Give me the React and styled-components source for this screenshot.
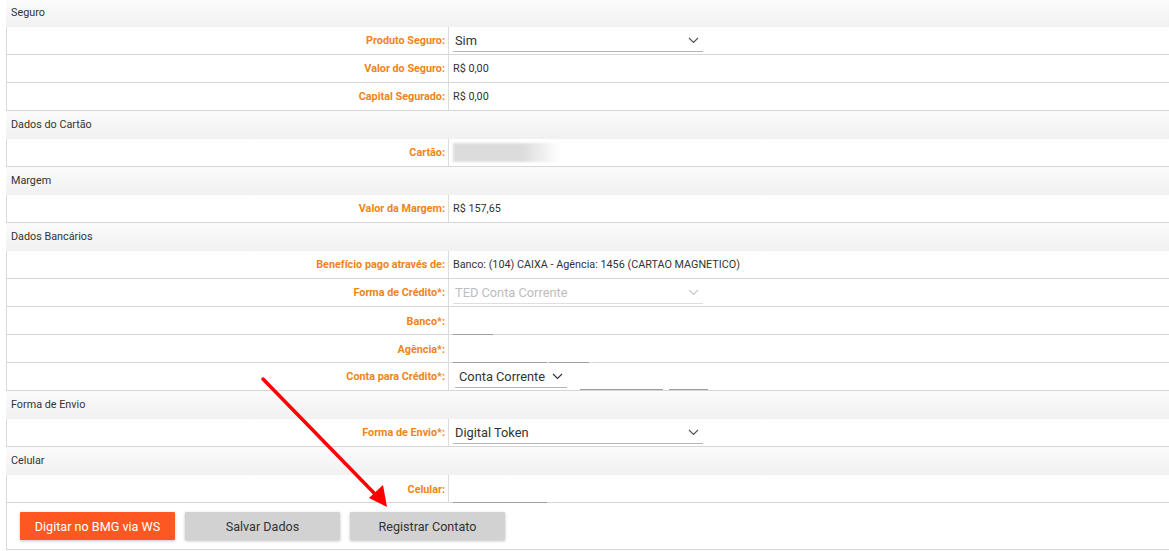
import React from "react";
import styled, { createGlobalStyle } from "styled-components";

const Global = createGlobalStyle`
  html, body { margin: 0; padding: 0; background: #fff; }
  body { font-family: Roboto, "Liberation Sans", Arial, sans-serif; font-size: 10.8px; color: #333; }
  * { box-sizing: border-box; }
`;

const Page = styled.div`
  position: relative;
  width: 1169px;
  height: 551px;
  overflow: hidden;
  background: #fff;
`;

const Table = styled.div`
  display: flex;
  flex-direction: column;
  padding-left: 6px;
`;

const SectionHeader = styled.div`
  height: 28px;
  display: flex;
  align-items: center;
  padding: 0 0 2px 5px;
  background: linear-gradient(#fbfbfb, #f1f1f1);
  color: #333;
  font-size: 10.8px;
  &:first-child { height: 27px; }
`;

const Row = styled.div`
  height: 28px;
  display: grid;
  grid-template-columns: 442px 1fr;
  border-left: 1px solid #d9d9d9;
  border-bottom: 1px solid #d6d6d6;
  background: #fff;
`;

const Label = styled.div`
  display: flex;
  align-items: center;
  justify-content: flex-end;
  padding-right: 3px;
  color: #ef8420;
  font-weight: 700;
  font-size: 10.8px;
  border-right: 1px solid #dcdcdc;
`;

const Value = styled.div`
  display: flex;
  align-items: center;
  gap: ${(p) => p.$gap || 2}px;
  padding-left: 4px;
  font-size: 10.8px;
  color: #333;
`;

const SelectBox = styled.div`
  width: ${(p) => p.$w}px;
  height: 22px;
  margin-top: ${(p) => p.$mt || 0}px;
  display: flex;
  align-items: center;
  justify-content: space-between;
  padding: 0 4px 0 ${(p) => p.$pl ?? 2}px;
  border-bottom: 1px solid ${(p) => (p.$disabled ? "#dedede" : "#b5b5b5")};
  color: ${(p) => (p.$disabled ? "#bdbdbd" : "#333")};
  font-size: 12.8px;
  svg { flex: none; }
`;

const Line = styled.div`
  width: ${(p) => p.$w}px;
  height: 18px;
  margin-top: ${(p) => p.$mt || 10}px;
  border-bottom: 1px solid #9e9e9e;
`;

const Blur = styled.div`
  width: 107px;
  height: 19px;
  background: linear-gradient(to right, #dcdcdc 0%, #dcdcdc 65%, #fff 100%);
  filter: blur(1px);
`;

const ButtonBar = styled.div`
  height: 47px;
  display: flex;
  align-items: center;
  gap: 10px;
  padding: 0 0 0 13px;
  border-left: 1px solid #d9d9d9;
  border-bottom: 1px solid #d6d6d6;
`;

const Button = styled.button`
  width: 155px;
  height: 28px;
  border: none;
  border-radius: 1px;
  font-family: Roboto, "Liberation Sans", Arial, sans-serif;
  font-size: 12.6px;
  color: ${(p) => (p.$primary ? "#fff" : "#333")};
  background: ${(p) => (p.$primary ? "#ff5722" : "#d2d2d2")};
  box-shadow: 0 1px 3px rgba(0, 0, 0, 0.25);
  padding: 0;
`;

const ArrowLayer = styled.svg`
  position: absolute;
  left: 0;
  top: 0;
  pointer-events: none;
`;

const Chevron = ({ color = "#555" }) => (
  <svg width="11" height="7" viewBox="0 0 11 7">
    <path d="M1 1 L5.5 5.5 L10 1" fill="none" stroke={color} strokeWidth="1.2" />
  </svg>
);

const Field = ({ label, children, gap }) => (
  <Row>
    <Label>{label}</Label>
    <Value $gap={gap}>{children}</Value>
  </Row>
);

export default function App() {
  return (
    <Page>
      <Global />
      <Table>
        <SectionHeader>Seguro</SectionHeader>
        <Field label="Produto Seguro:">
          <SelectBox $w={250}>
            <span>Sim</span>
            <Chevron />
          </SelectBox>
        </Field>
        <Field label="Valor do Seguro:">R$ 0,00</Field>
        <Field label="Capital Segurado:">R$ 0,00</Field>

        <SectionHeader>Dados do Cartão</SectionHeader>
        <Field label="Cartão:">
          <Blur />
        </Field>

        <SectionHeader>Margem</SectionHeader>
        <Field label="Valor da Margem:">R$ 157,65</Field>

        <SectionHeader>Dados Bancários</SectionHeader>
        <Field label="Benefício pago através de:">
          Banco: (104) CAIXA - Agência: 1456 (CARTAO MAGNETICO)
        </Field>
        <Field label="Forma de Crédito*:">
          <SelectBox $w={250} $disabled>
            <span>TED Conta Corrente</span>
            <Chevron color="#c8c8c8" />
          </SelectBox>
        </Field>
        <Field label="Banco*:">
          <Line $w={40} />
        </Field>
        <Field label="Agência*:">
          <Line $w={94} />
          <Line $w={40} />
        </Field>
        <Field label="Conta para Crédito*:" gap={6}>
          <SelectBox $w={112} $mt={1} $pl={4} style={{ marginLeft: 2 }}>
            <span>Conta Corrente</span>
            <Chevron color="#333" />
          </SelectBox>
          <Line $w={83} $mt={8} style={{ marginLeft: 7 }} />
          <Line $w={39} $mt={8} />
        </Field>

        <SectionHeader>Forma de Envio</SectionHeader>
        <Field label="Forma de Envio*:">
          <SelectBox $w={250}>
            <span>Digital Token</span>
            <Chevron />
          </SelectBox>
        </Field>

        <SectionHeader>Celular</SectionHeader>
        <Field label="Celular:">
          <Line $w={94} />
        </Field>

        <ButtonBar>
          <Button $primary>Digitar no BMG via WS</Button>
          <Button>Salvar Dados</Button>
          <Button>Registrar Contato</Button>
        </ButtonBar>
      </Table>

      <ArrowLayer width="1169" height="551" viewBox="0 0 1169 551">
        <line x1="263" y1="379" x2="375" y2="494" stroke="#ff0000" strokeWidth="3.5" strokeLinecap="round" />
        <polygon points="387,507 369,498 383,485" fill="#ff0000" />
      </ArrowLayer>
    </Page>
  );
}
